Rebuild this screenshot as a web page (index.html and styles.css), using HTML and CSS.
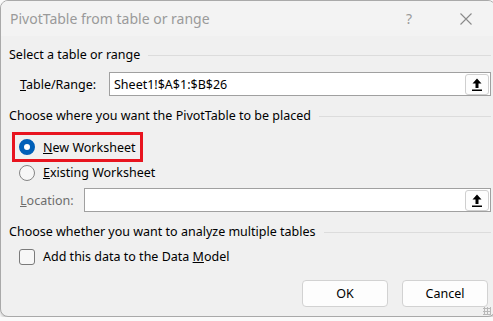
FILE: index.html
```html
<!DOCTYPE html>
<html lang="en">
<head>
    <meta charset="UTF-8">
    <meta name="viewport" content="width=device-width, initial-scale=1.0">
    <title>PivotTable from table or range</title>
    <link rel="stylesheet" href="styles.css">
</head>
<body>
    <div class="dialog">
        <div class="titlebar">
            <span class="title">PivotTable from table or range</span>
            <span class="help">?</span>
            <span class="close">
                <svg width="12" height="12" viewBox="0 0 12 12"><path d="M0.5 0.5 L11.5 11.5 M11.5 0.5 L0.5 11.5" stroke="#8a8a8a" stroke-width="1.1" fill="none"/></svg>
            </span>
        </div>

        <div class="content">
            <div class="section-head">Select a table or range</div>
            <div class="field-row range-row">
                <label class="field-label"><u>T</u>able/Range:</label>
                <div class="input-box">
                    <span class="input-text">Sheet1!$A$1:$B$26</span>
                    <span class="pick-btn">
                        <svg width="10" height="13" viewBox="0 0 10 13"><path d="M5 0.5 L9.5 5.5 L6.5 5.5 L6.5 10 L3.5 10 L3.5 5.5 L0.5 5.5 Z" fill="#000"/><rect x="0" y="11.5" width="10" height="1.5" fill="#000"/></svg>
                    </span>
                </div>
            </div>

            <div class="section-head place-head">Choose where you want the PivotTable to be placed</div>
            <div class="options">
                <div class="option highlighted">
                    <span class="radio checked"></span>
                    <span><u>N</u>ew Worksheet</span>
                </div>
                <div class="option">
                    <span class="radio"></span>
                    <span><u>E</u>xisting Worksheet</span>
                </div>
            </div>
            <div class="field-row location-row">
                <label class="field-label muted"><u>L</u>ocation:</label>
                <div class="input-box">
                    <span class="input-text"></span>
                    <span class="pick-btn">
                        <svg width="10" height="13" viewBox="0 0 10 13"><path d="M5 0.5 L9.5 5.5 L6.5 5.5 L6.5 10 L3.5 10 L3.5 5.5 L0.5 5.5 Z" fill="#000"/><rect x="0" y="11.5" width="10" height="1.5" fill="#000"/></svg>
                    </span>
                </div>
            </div>

            <div class="section-head multi-head">Choose whether you want to analyze multiple tables</div>
            <div class="option check-row">
                <span class="checkbox"></span>
                <span>Add this data to the Data <u>M</u>odel</span>
            </div>

            <div class="buttons">
                <button class="btn">OK</button>
                <button class="btn">Cancel</button>
            </div>
        </div>
        <span class="grip"></span>
    </div>
</body>
</html>
```

FILE: styles.css
```css
body {
    margin: 0;
    background: #fafafa;
    font-family: "Noto Sans", "Open Sans", sans-serif;
    font-size: 12.5px;
    color: #000;
}

.dialog {
    position: relative;
    width: 494px;
    height: 315px;
    background: #f0f0f0;
    border: 1px solid #a9a9a9;
    border-radius: 8px;
    overflow: hidden;
    box-shadow: 0 2px 3px rgba(0, 0, 0, 0.18);
}

.titlebar {
    height: 35px;
    display: flex;
    align-items: center;
    background: #f3f3f3;
    padding-left: 9px;
}

.title {
    font-size: 14px;
    color: #9a9a9a;
    flex: 1;
}

.help {
    font-size: 14px;
    color: #9a9a9a;
    width: 54px;
}

.close {
    display: flex;
    margin-right: 23px;
}

.content {
    padding: 0 4px 0 8px;
}

.section-head {
    display: flex;
    align-items: center;
    gap: 8px;
    height: 16px;
    line-height: 16px;
    margin-top: 11px;
    white-space: nowrap;
}

.section-head::after {
    content: "";
    flex: 1;
    border-top: 1px solid #dcdcdc;
}

.place-head,
.multi-head {
    margin-top: 12px;
}

.field-row {
    display: flex;
    align-items: center;
}

.range-row {
    margin-top: 9px;
}

.field-label {
    padding-left: 11px;
}

.range-row .field-label {
    width: 89px;
}

.location-row .field-label {
    width: 64px;
}

.muted {
    color: #6d6d6d;
}

.input-box {
    flex: 1;
    height: 22px;
    display: flex;
    align-items: center;
    background: #fff;
    border: 1px solid #a0a0a0;
}

.input-text {
    flex: 1;
    padding-left: 4px;
}

.pick-btn {
    width: 22px;
    height: 19px;
    margin-right: 1px;
    display: flex;
    align-items: center;
    justify-content: center;
    border: 1px solid #cfcfcf;
    border-radius: 3px;
    background: #fdfdfd;
}

.options {
    margin-top: 8px;
}

.option {
    position: relative;
    display: flex;
    align-items: center;
    height: 25px;
    padding-left: 10px;
    gap: 8px;
}

.option.highlighted {
    height: 30px;
    margin-bottom: -2px;
}

.option.highlighted::before {
    content: "";
    position: absolute;
    left: 3px;
    top: 0;
    width: 125px;
    height: 24px;
    border: 3px solid #e8141f;
}

.radio {
    width: 16px;
    height: 16px;
    box-sizing: border-box;
    border-radius: 50%;
    border: 1px solid #858585;
    background: #f7f7f7;
}

.radio.checked {
    border: 5px solid #005fb8;
    background: #fff;
}

.location-row {
    margin-top: 3px;
}

.check-row {
    margin-top: 4px;
}

.checkbox {
    width: 16px;
    height: 16px;
    box-sizing: border-box;
    border: 1px solid #7a7a7a;
    border-radius: 3px;
    background: #f7f7f7;
}

.buttons {
    display: flex;
    justify-content: flex-end;
    gap: 14px;
    margin-top: 11px;
    padding-right: 3px;
}

.btn {
    width: 86px;
    height: 27px;
    font-family: inherit;
    font-size: 12.5px;
    color: #000;
    background: #fdfdfd;
    border: 1px solid #d2d2d2;
    border-radius: 4px;
}

.grip {
    position: absolute;
    right: 4px;
    bottom: 1px;
    width: 8px;
    height: 8px;
    background-image: radial-gradient(circle, #b9b9b9 1px, transparent 1.2px);
    background-size: 3px 3px;
}
```
